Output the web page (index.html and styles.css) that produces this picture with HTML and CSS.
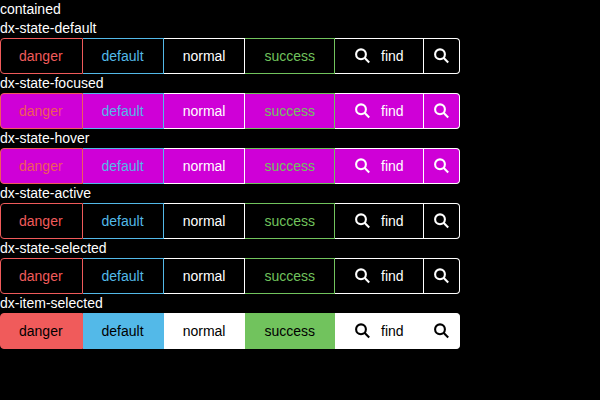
FILE: index.html
```
<!DOCTYPE html>
<html lang="en">
<head>
<meta charset="utf-8">
<title>Button group</title>
<link rel="stylesheet" href="styles.css">
</head>
<body>
<svg width="0" height="0" class="defs"><symbol id="search" viewBox="0 0 18 18"><circle cx="8" cy="7.3" r="4.9"/><path d="M11.3 10.6L16.2 15.5"/></symbol></svg>
<div class="label">contained</div>
<div id="groups"></div>
<script src="groups.js"></script>
</body>
</html>
```
FILE: groups.js
```
const states = ['dx-state-default', 'dx-state-focused', 'dx-state-hover', 'dx-state-active', 'dx-state-selected', 'dx-item-selected'];
const icon = '<svg class="icon"><use href="#search"/></svg>';

document.getElementById('groups').innerHTML = states.map(state => `
  <div class="label">${state}</div>
  <div class="group ${state}">
    <div class="button danger"><span>danger</span></div>
    <div class="button default"><span>default</span></div>
    <div class="button normal"><span>normal</span></div>
    <div class="button success"><span>success</span></div>
    <div class="button find">${icon}<span>find</span></div>
    <div class="button icon-only">${icon}</div>
  </div>`).join('');
```
FILE: styles.css
```
* { box-sizing: border-box; }
body {
  margin: 0;
  background: #000;
  color: #fff;
  font: 14px/19px "Liberation Sans", Arial, sans-serif;
}
.defs { display: none; }
.label { height: 19px; }
.group { display: flex; height: 36px; }
.button {
  --tone: #fff;
  display: flex;
  align-items: center;
  border: 1px solid var(--tone);
  border-left: 0;
  color: var(--tone);
}
.danger {
  --tone: #f05b5b;
  width: 83px;
  padding-left: 18px;
  border-left: 1px solid var(--tone);
  border-radius: 4px 0 0 4px;
}
.default { --tone: #53b9e8; width: 81px; padding-left: 18.5px; }
.normal { width: 81px; padding-left: 18.7px; }
.success { --tone: #71c35d; width: 90px; padding-left: 19.4px; }
.find { width: 89px; padding-left: 18px; gap: 10px; }
.icon-only { width: 36px; padding-left: 8px; border-radius: 0 4px 4px 0; }
.icon { width: 18px; height: 18px; fill: none; stroke: currentColor; stroke-width: 2.1; }
.dx-state-focused .button, .dx-state-hover .button { background: #cf00d7; }
.dx-item-selected .button { background: var(--tone); color: #000; }
```
